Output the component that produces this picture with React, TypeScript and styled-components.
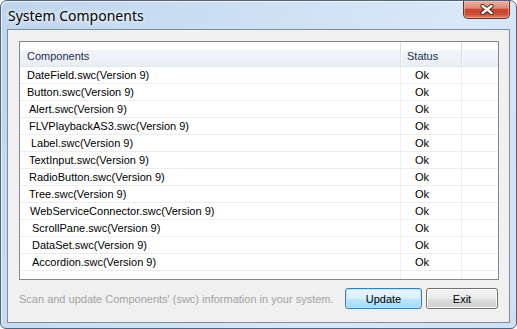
import React from "react"
import styled, { createGlobalStyle } from "styled-components"

const GlobalStyle = createGlobalStyle`
  html, body {
    margin: 0;
    padding: 0;
    background: #ffffff;
  }
  * {
    box-sizing: border-box;
  }
`

const Window = styled.div`
  width: 517px;
  height: 329px;
  display: flex;
  flex-direction: column;
  padding: 0 6px 5px 6px;
  border: 1px solid #52647a;
  border-radius: 7px 7px 6px 6px;
  background: linear-gradient(115deg, #bfd5ee 0%, #cde0f4 40%, #d9e8f8 70%, #cfe1f5 100%);
  box-shadow: inset 1px 1px 0 rgba(255, 255, 255, 0.7);
  font-family: "Liberation Sans", Arial, sans-serif;
`

const TitleBar = styled.div`
  height: 28px;
  display: flex;
  align-items: flex-start;
  justify-content: space-between;
`

const Title = styled.div`
  padding: 6px 0 0 1px;
  font-family: "Noto Sans", "Liberation Sans", sans-serif;
  font-size: 14px;
  line-height: 18px;
  color: #000000;
  text-shadow: 0 0 6px #ffffff, 0 0 3px #ffffff;
`

const CloseButton = styled.div`
  width: 47px;
  height: 18px;
  display: flex;
  align-items: center;
  justify-content: center;
  border: 1px solid #6e2c22;
  border-top: none;
  border-radius: 0 0 5px 5px;
  background: linear-gradient(#eab0a2 0%, #dd8a74 42%, #c5472f 50%, #c94c33 75%, #e0806a 100%);
  box-shadow: inset 0 0 0 1px rgba(255, 200, 180, 0.5);
`

const Client = styled.div`
  flex: 1;
  display: flex;
  flex-direction: column;
  padding: 11px 10px 0 11px;
  border: 1px solid #7f8e9e;
  background: #f0f0f0;
`

const Table = styled.div`
  flex: 1;
  display: flex;
  flex-direction: column;
  border: 1px solid #828790;
  background: #ffffff;
`

const Header = styled.div`
  height: 25px;
  display: grid;
  grid-template-columns: 381px 61px 1fr;
  border-bottom: 1px solid #e3e6ea;
  background: linear-gradient(#ffffff 0px, #ffffff 8px, #f2f5fa 8px, #e9eef5 100%);
`

const HeadCell = styled.div<{ $pad: number; $last?: boolean }>`
  padding: 8px 0 0 ${(p) => p.$pad}px;
  font-size: 11px;
  line-height: 13px;
  color: #1e3050;
  border-right: ${(p) => (p.$last ? "none" : "1px solid #dadde2")};
  box-shadow: ${(p) => (p.$last ? "none" : "1px 0 0 #ffffff")};
`

const Row = styled.div`
  height: 17px;
  display: grid;
  grid-template-columns: 381px 61px 1fr;
  border-bottom: 1px solid #ededed;
`

const Cell = styled.div<{ $pad: number; $last?: boolean }>`
  padding-left: ${(p) => p.$pad}px;
  font-size: 11px;
  line-height: 16px;
  color: #000000;
  white-space: nowrap;
  border-right: ${(p) => (p.$last ? "none" : "1px solid #efefef")};
`

const Filler = styled.div`
  flex: 1;
  display: grid;
  grid-template-columns: 381px 61px 1fr;
`

const Footer = styled.div`
  height: 42px;
  display: flex;
  align-items: center;
  padding: 0 1px 5px 0;
  gap: 4px;
`

const Hint = styled.div`
  flex: 1;
  font-size: 11px;
  color: #a2a2a2;
  white-space: nowrap;
`

const Button = styled.button<{ $focused?: boolean; $w: number }>`
  width: ${(p) => p.$w}px;
  height: 21px;
  padding: 0;
  font-family: "Liberation Sans", Arial, sans-serif;
  font-size: 11px;
  color: #000000;
  border-radius: 3px;
  border: 1px solid ${(p) => (p.$focused ? "#3c7fb1" : "#707070")};
  background: ${(p) =>
    p.$focused
      ? "linear-gradient(#eaf6fd 0%, #d9f0fc 50%, #bee6fd 51%, #a7d9f5 100%)"
      : "linear-gradient(#f2f2f2 0%, #ebebeb 50%, #dddddd 51%, #cfcfcf 100%)"};
  box-shadow: inset 0 0 0 1px ${(p) => (p.$focused ? "#bde4f8" : "#fcfcfc")};
`

const components = [
  { name: "DateField.swc(Version 9)", indent: 7 },
  { name: "Button.swc(Version 9)", indent: 7 },
  { name: "Alert.swc(Version 9)", indent: 9 },
  { name: "FLVPlaybackAS3.swc(Version 9)", indent: 9 },
  { name: "Label.swc(Version 9)", indent: 11 },
  { name: "TextInput.swc(Version 9)", indent: 9 },
  { name: "RadioButton.swc(Version 9)", indent: 9 },
  { name: "Tree.swc(Version 9)", indent: 9 },
  { name: "WebServiceConnector.swc(Version 9)", indent: 10 },
  { name: "ScrollPane.swc(Version 9)", indent: 12 },
  { name: "DataSet.swc(Version 9)", indent: 12 },
  { name: "Accordion.swc(Version 9)", indent: 12 },
]

const CloseIcon = () => (
  <svg width="16" height="11" viewBox="0 0 16 11">
    <path d="M3.5 2 L12.5 9 M12.5 2 L3.5 9" stroke="#4a1a12" strokeWidth="4.2" strokeLinecap="round" />
    <path d="M3.5 2 L12.5 9 M12.5 2 L3.5 9" stroke="#ffffff" strokeWidth="2.4" strokeLinecap="round" />
  </svg>
)

const App: React.FC = () => {
  return (
    <>
      <GlobalStyle />
      <Window>
        <TitleBar>
          <Title>System Components</Title>
          <CloseButton>
            <CloseIcon />
          </CloseButton>
        </TitleBar>
        <Client>
          <Table>
            <Header>
              <HeadCell $pad={7}>Components</HeadCell>
              <HeadCell $pad={6}>Status</HeadCell>
              <HeadCell $pad={0} $last />
            </Header>
            {components.map((c) => (
              <Row key={c.name}>
                <Cell $pad={c.indent}>{c.name}</Cell>
                <Cell $pad={14}>Ok</Cell>
                <Cell $pad={0} $last />
              </Row>
            ))}
            <Filler>
              <Cell $pad={0} />
              <Cell $pad={0} />
              <Cell $pad={0} $last />
            </Filler>
          </Table>
          <Footer>
            <Hint>Scan and update Components' (swc) information in your system.</Hint>
            <Button $focused $w={77}>Update</Button>
            <Button $w={72}>Exit</Button>
          </Footer>
        </Client>
      </Window>
    </>
  )
}

export default App
